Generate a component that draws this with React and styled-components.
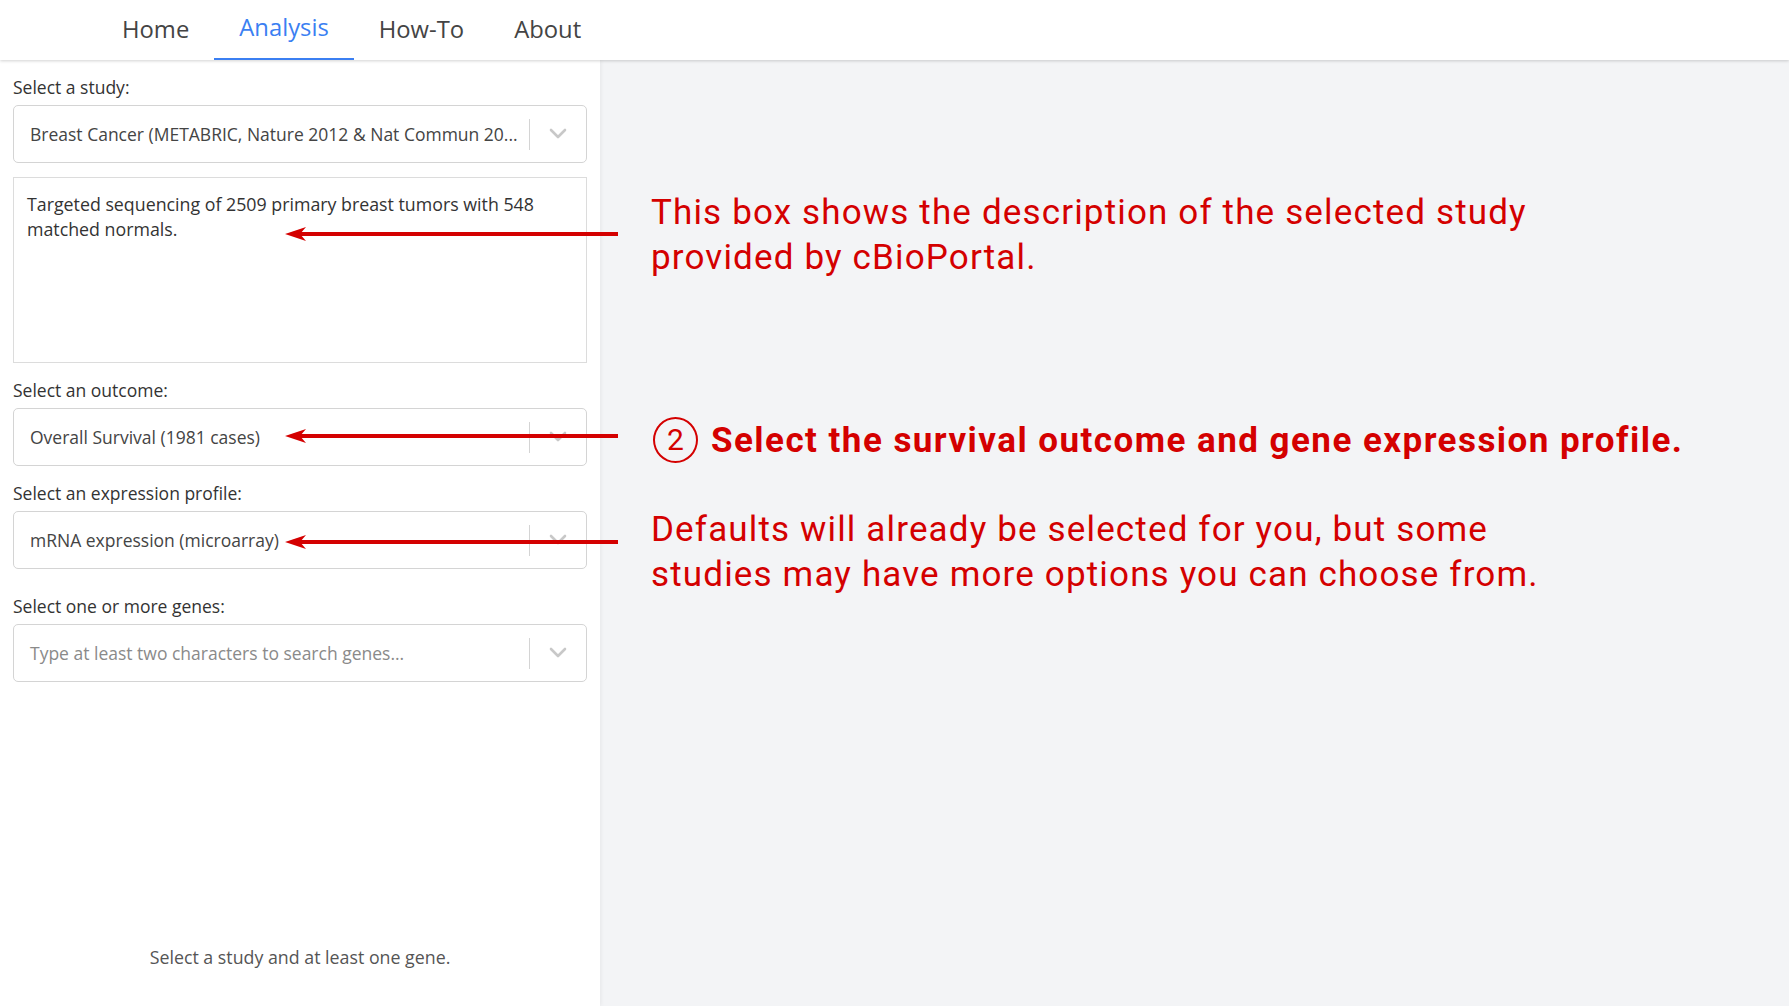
import React from "react";
import styled, { createGlobalStyle } from "styled-components";

const GlobalStyle = createGlobalStyle`
  html, body {
    margin: 0;
    padding: 0;
    height: 100%;
  }
  body {
    font-family: "Open Sans", "Noto Sans", sans-serif;
    background-color: #f3f4f6;
    color: #333;
  }
`;

const Page = styled.div`
  display: flex;
  flex-direction: column;
  height: 100vh;
  overflow: hidden;
`;

const NavBar = styled.nav`
  display: flex;
  align-items: stretch;
  height: 60px;
  padding-left: 97px;
  background-color: #fff;
  box-shadow: 0 1px 3px rgba(0, 0, 0, 0.18);
  position: relative;
  z-index: 2;
`;

const Tab = styled.div`
  display: flex;
  align-items: center;
  padding: 0 25px ${props => (props.active ? "4px" : "0")};
  font-size: 23.8px;
  color: ${props => (props.active ? "#3b7ff2" : "#444")};
  border-bottom: 2px solid ${props => (props.active ? "#3b7ff2" : "transparent")};
  box-sizing: border-box;
`;

const Main = styled.div`
  flex: 1;
  display: flex;
  position: relative;
`;

const Sidebar = styled.aside`
  width: 600px;
  box-sizing: border-box;
  padding: 15px 13px 0;
  background-color: #fff;
  display: flex;
  flex-direction: column;
  box-shadow: 1px 0 4px rgba(0, 0, 0, 0.06);
  position: relative;
  z-index: 1;
`;

const Label = styled.div`
  font-size: 17.5px;
  line-height: 24px;
  color: #333;
  margin-top: ${props => props.gap || 0}px;
  margin-bottom: 6px;
`;

const SelectBox = styled.div`
  display: flex;
  align-items: center;
  height: 58px;
  box-sizing: border-box;
  border: 1px solid #d4d4d4;
  border-radius: 5px;
  background-color: #fff;
`;

const SelectValue = styled.div`
  flex: 1;
  min-width: 0;
  padding-left: 16px;
  font-size: 17.5px;
  color: ${props => (props.placeholder ? "#8a8a8a" : "#444")};
  white-space: nowrap;
  overflow: hidden;
`;

const Separator = styled.span`
  width: 1px;
  height: 31px;
  background-color: #d4d4d4;
`;

const Indicator = styled.div`
  width: 56px;
  display: flex;
  justify-content: center;
  align-items: center;
  color: #c8c8c8;
`;

const Description = styled.div`
  margin-top: 14px;
  height: 186px;
  box-sizing: border-box;
  border: 1px solid #dcdcdc;
  padding: 14px 13px;
  font-size: 17.8px;
  line-height: 25px;
  color: #333;
`;

const Footer = styled.div`
  margin-top: auto;
  margin-bottom: 37px;
  text-align: center;
  font-size: 17.8px;
  color: #555;
`;

const Notes = styled.section`
  flex: 1;
  padding: 130px 0 0 51px;
  font-family: Roboto, "Liberation Sans", sans-serif;
  color: #d40000;
`;

const Note = styled.p`
  margin: ${props => props.gap || 0}px 0 0;
  font-size: 35px;
  line-height: 45px;
  letter-spacing: ${props => (props.bold ? "1.45px" : "1.15px")};
  font-weight: ${props => (props.bold ? 700 : 400)};
  white-space: nowrap;
`;

const StepRow = styled.div`
  display: flex;
  align-items: center;
  gap: 13px;
  margin-top: 137px;
  margin-left: 2px;
  height: 46px;
`;

const StepNumber = styled.span`
  width: 41px;
  height: 42px;
  flex-shrink: 0;
  border: 2px solid #d40000;
  border-radius: 50%;
  display: flex;
  align-items: center;
  justify-content: center;
  font-size: 30px;
  font-weight: 400;
  line-height: 1;
`;

const Overlay = styled.svg`
  position: absolute;
  top: 0;
  left: 0;
  width: 100%;
  height: 100%;
  pointer-events: none;
  z-index: 3;
`;

const Chevron = () => (
  <svg width="18" height="12" viewBox="0 0 18 12">
    <path d="M2 2 L9 9 L16 2" fill="none" stroke="currentColor" strokeWidth="2.6" strokeLinecap="round" strokeLinejoin="round" />
  </svg>
);

const Select = ({ value, placeholder }) => (
  <SelectBox>
    <SelectValue placeholder={placeholder ? 1 : undefined}>{value || placeholder}</SelectValue>
    <Separator />
    <Indicator>
      <Chevron />
    </Indicator>
  </SelectBox>
);

const Arrow = ({ y }) => (
  <g fill="#d40000">
    <rect x="300" y={y - 2} width="318" height="4" />
    <path d={`M285 ${y} L306 ${y - 7} L300 ${y} L306 ${y + 7} Z`} />
  </g>
);

const tabs = ["Home", "Analysis", "How-To", "About"];

const App = () => {
  return (
    <Page>
      <GlobalStyle />
      <NavBar>
        {tabs.map(tab => (
          <Tab key={tab} active={tab === "Analysis" ? 1 : undefined}>
            {tab}
          </Tab>
        ))}
      </NavBar>
      <Main>
        <Sidebar>
          <Label>Select a study:</Label>
          <Select value="Breast Cancer (METABRIC, Nature 2012 & Nat Commun 20..." />
          <Description>
            Targeted sequencing of 2509 primary breast tumors with 548 matched normals.
          </Description>

          <Label gap={15}>Select an outcome:</Label>
          <Select value="Overall Survival (1981 cases)" />

          <Label gap={15}>Select an expression profile:</Label>
          <Select value="mRNA expression (microarray)" />

          <Label gap={25}>Select one or more genes:</Label>
          <Select placeholder="Type at least two characters to search genes..." />

          <Footer>Select a study and at least one gene.</Footer>
        </Sidebar>

        <Notes>
          <Note>
            This box shows the description of the selected study
            <br />
            provided by cBioPortal.
          </Note>
          <StepRow>
            <StepNumber>2</StepNumber>
            <Note bold>Select the survival outcome and gene expression profile.</Note>
          </StepRow>
          <Note gap={44}>
            Defaults will already be selected for you, but some
            <br />
            studies may have more options you can choose from.
          </Note>
        </Notes>

        <Overlay>
          <Arrow y={174} />
          <Arrow y={376} />
          <Arrow y={482} />
        </Overlay>
      </Main>
    </Page>
  );
};

export default App;
